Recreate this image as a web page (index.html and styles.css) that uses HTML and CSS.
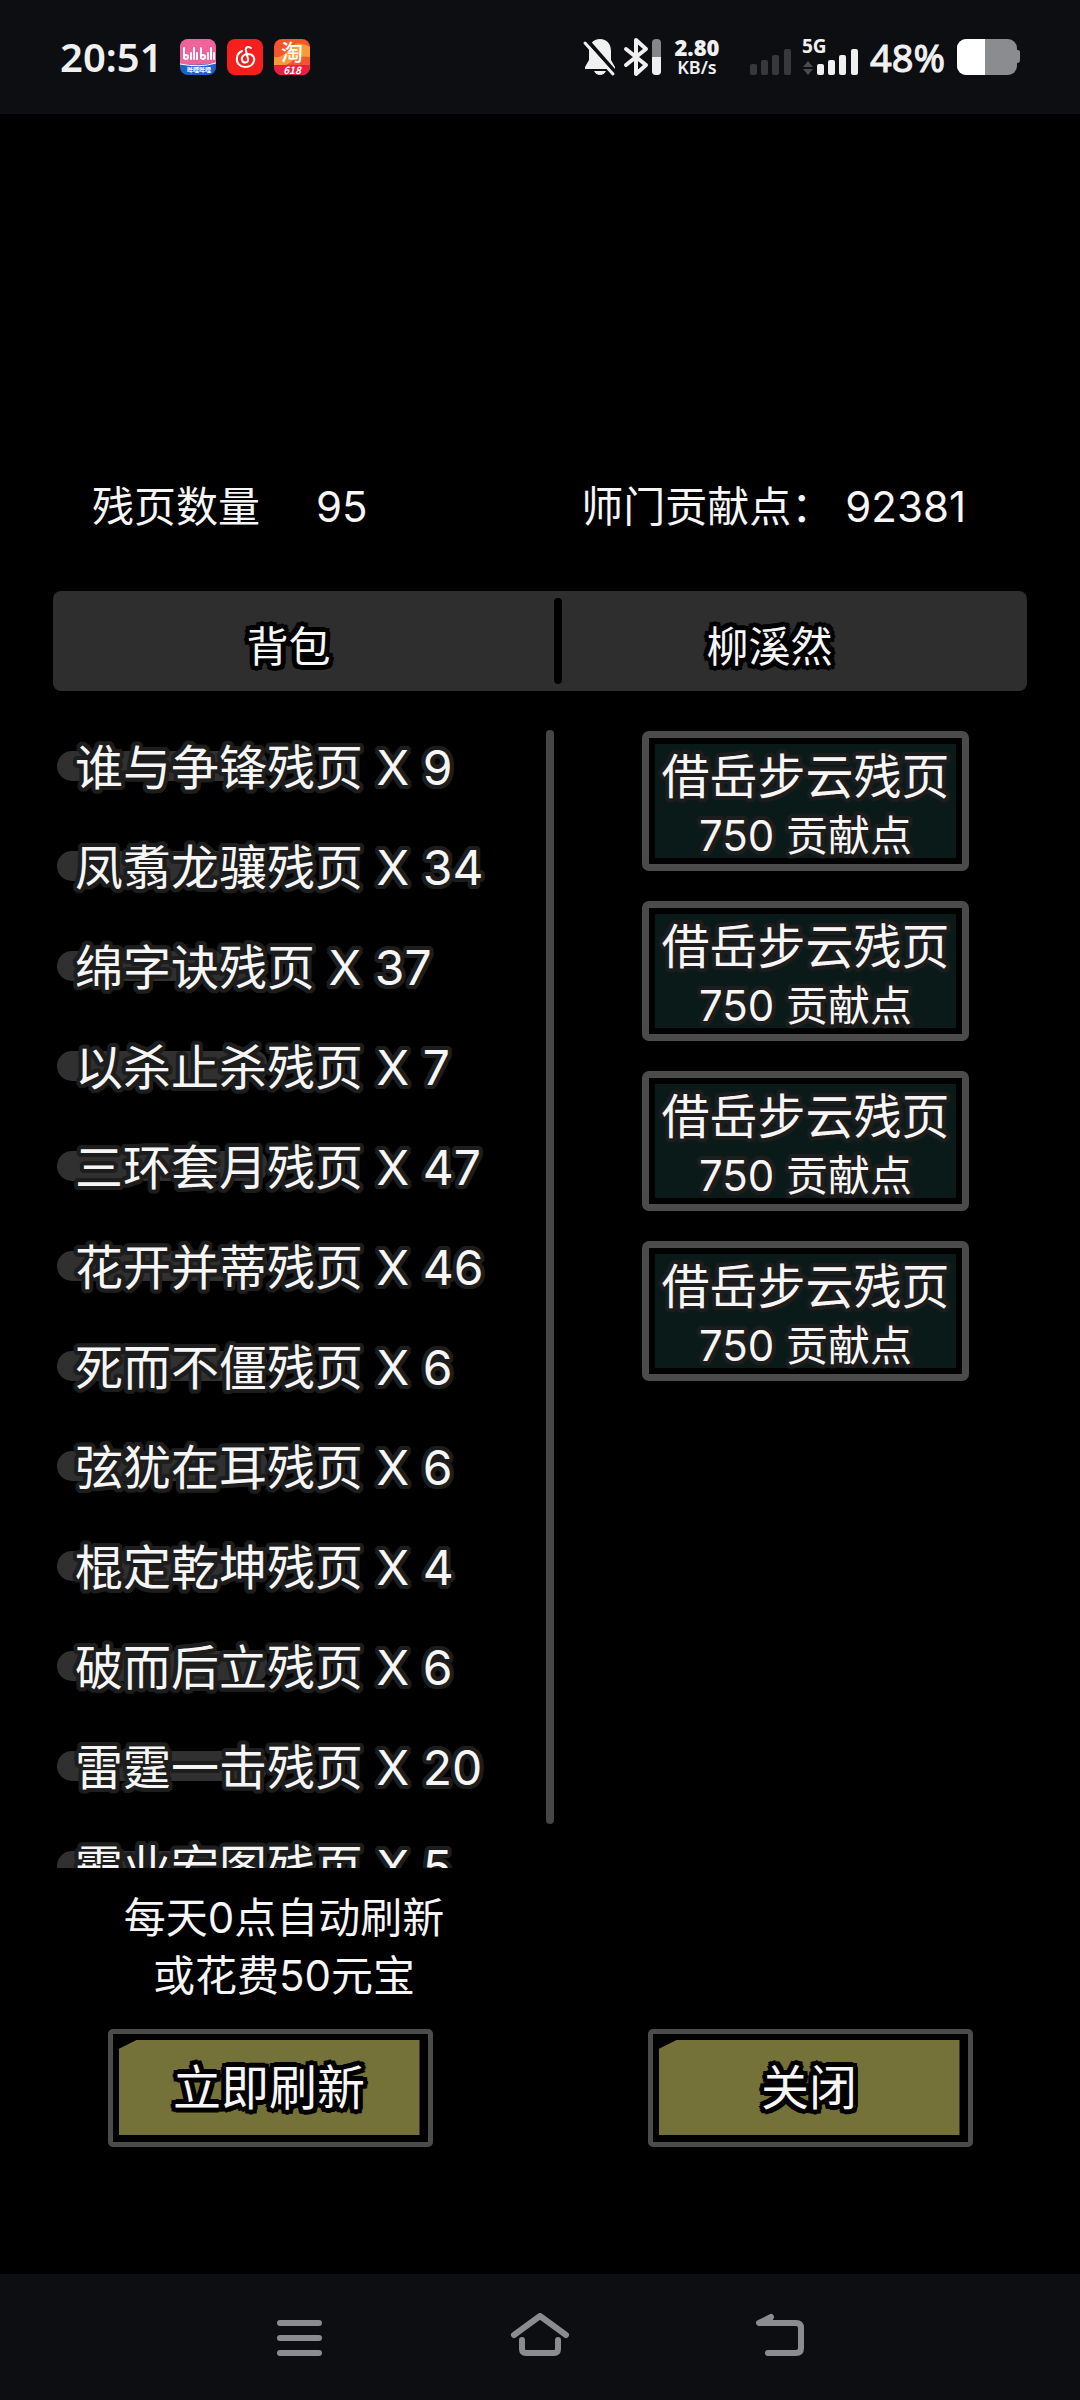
FILE: index.html
```html
<!DOCTYPE html>
<html lang="zh-CN">
<head>
<meta charset="utf-8">
<meta name="viewport" content="width=device-width">
<title>残页</title>
<link rel="stylesheet" href="styles.css">
</head>
<body>
<header class="status">
	<div class="status-left">
		<span class="clock">20:51</span>
		<svg class="app" viewBox="0 0 36 36">
			<rect width="36" height="36" rx="8" fill="#1f5fd0"/>
			<path d="M0 25V8a8 8 0 0 1 8-8h20a8 8 0 0 1 8 8v16q-18 3-36 1z" fill="#f0629a"/>
			<path d="M0 25q20 4 36-1" fill="none" stroke="#fff" stroke-width="1"/>
			<g fill="none" stroke="#fff" stroke-width="2" stroke-linecap="round">
				<path d="M4 9v10M11 14v6M14 9v11M17 14v6M21 9v10M28 14v6M31 9v11M34 14v6"/>
				<circle cx="6" cy="18" r="2"/><circle cx="23" cy="18" r="2"/>
			</g>
			<text class="app-tag" x="19" y="33">哔哩哔哩</text>
		</svg>
		<svg class="app" viewBox="0 0 36 36">
			<rect width="36" height="36" rx="8" fill="#f5201d"/>
			<path d="M24 9c-3-2-6-1-5 3l2 8c1 4-5 5-6 1-1-4 3-6 6-6 5 0 7 4 6 7-1 4-5 6-9 6-5 0-9-4-8-9 0-4 3-6 5-7" fill="none" stroke="#fff" stroke-width="2" stroke-linecap="round"/>
		</svg>
		<svg class="app" viewBox="0 0 36 36">
			<rect width="36" height="36" rx="8" fill="#f4552a"/>
			<path d="M0 18q8 2 15-8t21-2v10q-12-2-18 4T0 26z" fill="#fb9a3c"/>
			<path d="M0 26h36v2a8 8 0 0 1-8 8H8a8 8 0 0 1-8-8z" fill="#e8203f"/>
			<text class="app-tao" x="18" y="21">淘</text>
			<text class="app-618" x="18" y="35">618</text>
		</svg>
	</div>
	<div class="status-right">
		<svg width="32" height="38" viewBox="0 0 32 38">
			<path d="M16 1C9 1 5 6 5 13v9l-4 7v2h30v-2l-4-7v-9C27 6 23 1 16 1zM10 33h12q-2 4-6 4t-6-4z" fill="#f0f0f1"/>
			<path d="M3 2l28 32" stroke="#0d0e12" stroke-width="4"/>
			<path d="M1 5l28 31" stroke="#f0f0f1" stroke-width="3" stroke-linecap="round"/>
		</svg>
		<svg class="bt" width="37" height="38" viewBox="0 0 37 38">
			<path d="M2 11l20 16-10 9V2l10 9L2 27" fill="none" stroke="#f0f0f1" stroke-width="4" stroke-linejoin="round" stroke-linecap="round"/>
			<rect x="28" y="1" width="9" height="36" rx="4" fill="#85868a"/>
			<path d="M28 19h9v14a4 4 0 0 1-4 4h-1a4 4 0 0 1-4-4z" fill="#f0f0f1"/>
		</svg>
		<div class="speed"><b>2.80</b><span>KB/s</span></div>
		<svg class="sim1" width="41" height="38" viewBox="0 0 41 38" fill="#37383c">
			<rect x="0" y="26" width="7" height="11" rx="2"/><rect x="11" y="22" width="7" height="15" rx="2"/><rect x="22" y="17" width="7" height="20" rx="2"/><rect x="34" y="11" width="7" height="26" rx="2"/>
		</svg>
		<svg class="sim2" width="56" height="38" viewBox="0 0 56 38" fill="#f0f0f1">
			<path d="M1 29l5-6 5 6zM1 31h10l-5 6z" fill="#4a4b4f"/>
			<rect x="15" y="26" width="7" height="11" rx="2"/><rect x="26" y="22" width="7" height="15" rx="2"/><rect x="37" y="17" width="7" height="20" rx="2"/><rect x="49" y="11" width="7" height="26" rx="2"/>
			<text class="net" x="0" y="15">5G</text>
		</svg>
		<span class="percent">48%</span>
		<svg width="64" height="38" viewBox="0 0 64 38">
			<rect x="1" y="1" width="60" height="36" rx="9" fill="#8b8c8f"/>
			<path d="M60 12h2a2 2 0 0 1 2 2v8a3 3 0 0 1-3 3h-1z" fill="#8b8c8f"/>
			<path d="M29 1v36H10a9 9 0 0 1-9-9V10a9 9 0 0 1 9-9z" fill="#fff"/>
		</svg>
	</div>
</header>

<main class="game">
	<div class="stats">
		<div>残页数量<span class="pages">95</span></div>
		<div>师门贡献点：<span class="points">92381</span></div>
	</div>

	<div class="tabs">
		<div class="tab bag">背包</div>
		<div class="tab-line"></div>
		<div class="tab npc">柳溪然</div>
	</div>

	<div class="columns">
		<ul class="items">
			<li>谁与争锋残页 X 9</li>
			<li>凤翥龙骧残页 X 34</li>
			<li>绵字诀残页 X 37</li>
			<li>以杀止杀残页 X 7</li>
			<li>三环套月残页 X 47</li>
			<li>花开并蒂残页 X 46</li>
			<li>死而不僵残页 X 6</li>
			<li>弦犹在耳残页 X 6</li>
			<li>棍定乾坤残页 X 4</li>
			<li>破而后立残页 X 6</li>
			<li>雷霆一击残页 X 20</li>
			<li>霸业宏图残页 X 5</li>
		</ul>
		<div class="scrollbar"></div>
		<div class="shop">
			<button class="goods"><span>借岳步云残页</span><small>750 贡献点</small></button>
			<button class="goods"><span>借岳步云残页</span><small>750 贡献点</small></button>
			<button class="goods"><span>借岳步云残页</span><small>750 贡献点</small></button>
			<button class="goods"><span>借岳步云残页</span><small>750 贡献点</small></button>
		</div>
	</div>

	<div class="actions">
		<div class="action">
			<p>每天0点自动刷新<br>或花费50元宝</p>
			<button class="btn"><span>立即刷新</span></button>
		</div>
		<div class="action">
			<button class="btn"><span>关闭</span></button>
		</div>
	</div>
</main>

<nav class="navbar">
	<button aria-label="菜单"><svg width="60" height="48" viewBox="0 0 60 48"><path d="M10 10h39M10 25h39M10 40h39"/></svg></button>
	<button aria-label="主页"><svg width="60" height="48" viewBox="0 0 60 48"><path d="M4 22L30 3l26 19M12 27v9q0 4 4 4h28q4 0 4-4v-9"/></svg></button>
	<button aria-label="返回"><svg width="60" height="48" viewBox="0 0 60 48"><path d="M21 4L9 10h37q5 0 5 5v20q0 5-5 5H18M10 10l10-5v5"/></svg></button>
</nav>
</body>
</html>
```
FILE: styles.css
```css
body {
	margin: 0;
	min-height: 100vh;
	display: flex;
	flex-direction: column;
	background: #000;
	color: #f6f6f6;
	font-family: Inter, "Noto Sans CJK SC", sans-serif;
	font-size: 42px;
	line-height: 60px;
}
button {
	font: inherit;
	color: inherit;
	border: 0;
	padding: 0;
	background: none;
}

/* phone status bar */
.status {
	height: 114px;
	box-sizing: border-box;
	padding: 0 60px;
	display: flex;
	align-items: center;
	justify-content: space-between;
	background: #0d0e12;
	color: #f0f0f1;
	font-family: "Noto Sans", sans-serif;
}
.status-left, .status-right {
	display: flex;
	align-items: center;
}
.clock {
	font-size: 40px;
	font-weight: 600;
	margin-right: 6px;
}
.app {
	width: 36px;
	height: 36px;
	margin-left: 11px;
}
.app text {
	fill: #fff;
	text-anchor: middle;
	font-family: "Noto Sans CJK SC", sans-serif;
}
.app .app-tag {
	font-size: 6px;
	font-weight: 700;
}
.app .app-tao {
	font-size: 22px;
	font-weight: 500;
}
.app .app-618 {
	font-size: 10px;
	font-weight: 700;
	font-style: italic;
}
.status svg {
	overflow: visible;
}
.bt {
	margin-left: 8px;
}
.speed {
	width: 60px;
	margin-left: 6px;
	margin-right: 2px;
	display: flex;
	flex-direction: column;
	text-align: center;
	font-weight: 600;
	font-size: 18px;
	line-height: 20px;
}
.speed b {
	font-size: 22px;
	line-height: 20px;
}
.sim1 {
	margin-left: 21px;
}
.sim2 {
	margin-left: 11px;
}
.net {
	font-size: 19px;
	font-weight: 700;
}
.percent {
	margin: 0 11px 0 12px;
	font-size: 38px;
	-webkit-text-stroke: 1px;
}

.game {
	flex: 1;
	padding: 0 53px;
}
.stats {
	display: flex;
	justify-content: space-between;
	margin: 363px 61px 54px 39px;
}
.pages {
	margin-left: 56px;
}
.points {
	margin-left: 12px;
}

/* text outlines, set by --line */
.tab, .btn {
	--line: #000;
	text-shadow: 5px 0 var(--line), 4px 2px var(--line), 4px 4px var(--line), 2px 4px var(--line),
		0 5px var(--line), -2px 4px var(--line), -4px 4px var(--line), -4px 2px var(--line),
		-5px 0 var(--line), -4px -2px var(--line), -4px -4px var(--line), -2px -4px var(--line),
		0 -5px var(--line), 2px -4px var(--line), 4px -4px var(--line), 4px -2px var(--line),
		2px 0 var(--line), 0 2px var(--line), -2px 0 var(--line), 0 -2px var(--line);
}
.items, .goods {
	--line: #1d1d1d;
	text-shadow: 4px 0 var(--line), 4px 2px var(--line), 3px 3px var(--line), 2px 4px var(--line),
		0 4px var(--line), -2px 4px var(--line), -3px 3px var(--line), -4px 2px var(--line),
		-4px 0 var(--line), -4px -2px var(--line), -3px -3px var(--line), -2px -4px var(--line),
		0 -4px var(--line), 2px -4px var(--line), 3px -3px var(--line), 4px -2px var(--line),
		2px 0 var(--line), 0 2px var(--line), -2px 0 var(--line), 0 -2px var(--line);
}

.tabs {
	display: grid;
	grid-template-columns: 501fr 8px 465fr;
	align-items: center;
	height: 100px;
	border-radius: 8px;
	background: #2e2e2e;
}
.tab {
	text-align: center;
	padding-top: 12px;
}
.bag {
	padding-right: 30px;
}
.npc {
	padding-right: 50px;
}
.tab-line {
	height: 86px;
	border-radius: 4px;
	background: #000;
}

.columns {
	display: grid;
	grid-template-columns: 493fr 8px 473fr;
	margin-top: 27px;
	height: 1150px;
}
.items {
	margin: 0;
	padding: 0;
	list-style: none;
	overflow: hidden;
	font-size: 48px;
	line-height: 100px;
}
.items li {
	position: relative;
	z-index: 0;
	height: 100px;
	padding-left: 22px;
	white-space: nowrap;
}
/* ink stroke behind the item name */
.items li::before {
	content: "";
	position: absolute;
	z-index: -1;
	left: 4px;
	top: 33px;
	width: 210px;
	height: 30px;
	border-radius: 20px 15px 15px 20px;
	background: #303030;
}
.scrollbar {
	height: 1094px;
	margin-top: 12px;
	border-radius: 4px;
	background: #464646;
}
.shop {
	padding: 13px 0 0 30px;
	display: flex;
	flex-direction: column;
	align-items: center;
	gap: 30px;
}
.goods {
	box-sizing: border-box;
	width: 327px;
	height: 140px;
	border: 7px solid #4b4b4b;
	border-radius: 7px;
	background: #0a1a19;
	box-shadow: inset 0 0 0 6px #000;
	padding-top: 10px;
	display: flex;
	flex-direction: column;
	justify-content: center;
	align-items: center;
	white-space: nowrap;
}
.goods span {
	font-size: 48px;
	line-height: 60px;
}
.goods small {
	font-size: 42px;
	line-height: 58px;
}

.actions {
	display: flex;
	align-items: flex-end;
	margin: 21px -53px 0;
}
.action {
	flex: 1;
	text-align: center;
}
.action p {
	margin: 0 0 24px 28px;
	line-height: 58px;
}
.btn {
	width: 325px;
	height: 118px;
	border: 5px solid #4b4b4b;
	border-radius: 5px;
	padding: 6px 8px 7px 6px;
	font-size: 48px;
}
.btn span {
	display: flex;
	align-items: center;
	justify-content: center;
	height: 100%;
	background: #747238;
	clip-path: polygon(0 9px, 18px 0, 100% 0, 100% 100%, 0 100%);
}

.navbar {
	height: 126px;
	display: flex;
	justify-content: center;
	align-items: center;
	gap: 180px;
	background: #0d0e12;
}
.navbar svg {
	display: block;
	fill: none;
	stroke: #8b8c90;
	stroke-width: 6;
	stroke-linecap: round;
	stroke-linejoin: round;
}
```
